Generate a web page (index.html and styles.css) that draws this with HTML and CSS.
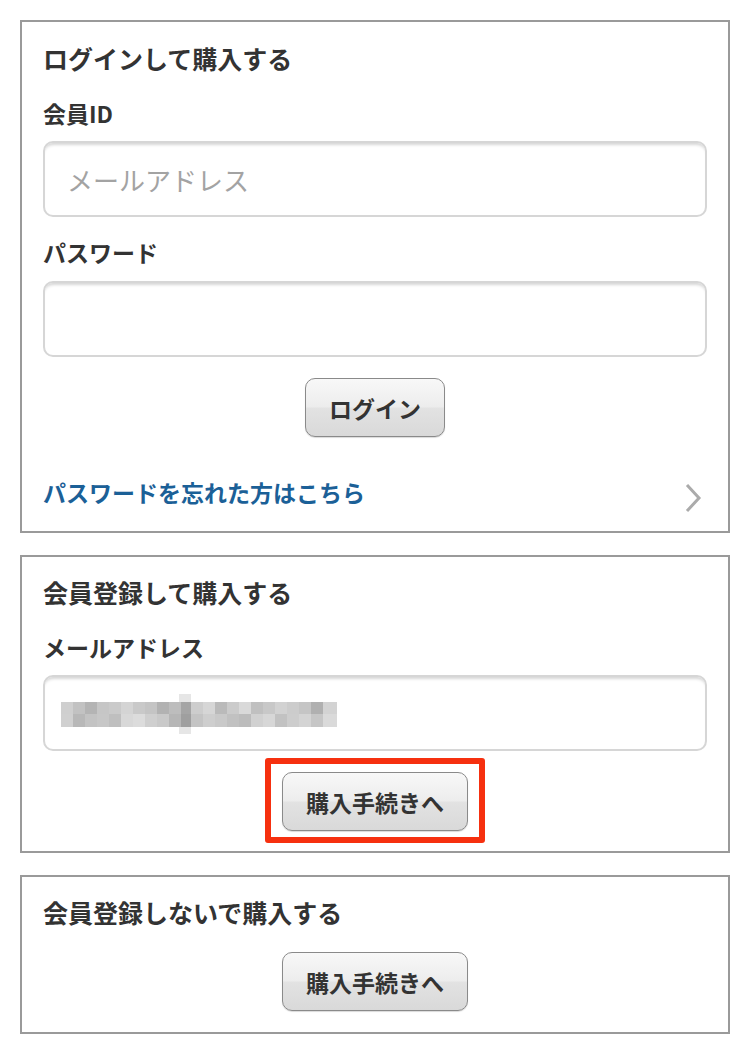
FILE: index.html
```html
<!DOCTYPE html>
<html lang="ja">
<head>
  <meta charset="UTF-8">
  <meta name="viewport" content="width=device-width, initial-scale=1.0">
  <title>購入方法の選択</title>
  <link rel="stylesheet" href="styles.css">
</head>
<body>

<!-- login -->
<div class="card">
  <h2 class="card-title">ログインして購入する</h2>
  <div class="label">会員ID</div>
  <input class="field" type="text" placeholder="メールアドレス">
  <div class="label">パスワード</div>
  <input class="field" type="password">
  <div class="btn-row">
    <button class="btn">ログイン</button>
  </div>
  <a class="link-row" href="#">
    <span>パスワードを忘れた方はこちら</span>
    <svg class="chevron" width="18" height="30" viewBox="0 0 18 30">
      <path d="M3 2 L15 15 L3 28" fill="none" stroke="#ababab" stroke-width="3"/>
    </svg>
  </a>
</div>

<!-- register -->
<div class="card">
  <h2 class="card-title">会員登録して購入する</h2>
  <div class="label">メールアドレス</div>
  <div class="field filled">
    <svg class="mosaic" width="280" height="40" viewBox="0 0 280 40">
      <rect x="118" y="0" width="12" height="40" fill="#e6e6e6"/>
      <g>
        <rect x="0" y="8" width="12" height="12" fill="#cfcfcf"/>
        <rect x="12" y="8" width="12" height="12" fill="#c2c2c2"/>
        <rect x="24" y="8" width="12" height="12" fill="#b4b4b4"/>
        <rect x="36" y="8" width="12" height="12" fill="#c6c6c6"/>
        <rect x="48" y="8" width="12" height="12" fill="#cacaca"/>
        <rect x="60" y="8" width="12" height="12" fill="#d4d4d4"/>
        <rect x="72" y="8" width="12" height="12" fill="#c9c9c9"/>
        <rect x="84" y="8" width="12" height="12" fill="#c4c4c4"/>
        <rect x="96" y="8" width="12" height="12" fill="#b2b2b2"/>
        <rect x="108" y="8" width="12" height="12" fill="#bdbdbd"/>
        <rect x="120" y="8" width="10" height="12" fill="#a5a5a5"/>
        <rect x="130" y="8" width="12" height="12" fill="#cdcdcd"/>
        <rect x="142" y="8" width="12" height="12" fill="#d6d6d6"/>
        <rect x="154" y="8" width="12" height="12" fill="#bababa"/>
        <rect x="166" y="8" width="12" height="12" fill="#cbcbcb"/>
        <rect x="178" y="8" width="12" height="12" fill="#d9d9d9"/>
        <rect x="190" y="8" width="12" height="12" fill="#c0c0c0"/>
        <rect x="202" y="8" width="12" height="12" fill="#c8c8c8"/>
        <rect x="214" y="8" width="12" height="12" fill="#d2d2d2"/>
        <rect x="226" y="8" width="12" height="12" fill="#cccccc"/>
        <rect x="238" y="8" width="12" height="12" fill="#c5c5c5"/>
        <rect x="250" y="8" width="12" height="12" fill="#b0b0b0"/>
        <rect x="262" y="8" width="14" height="12" fill="#d3d3d3"/>
      </g>
      <g>
        <rect x="0" y="20" width="12" height="13" fill="#d0d0d0"/>
        <rect x="12" y="20" width="12" height="13" fill="#b8b8b8"/>
        <rect x="24" y="20" width="12" height="13" fill="#c3c3c3"/>
        <rect x="36" y="20" width="12" height="13" fill="#c7c7c7"/>
        <rect x="48" y="20" width="12" height="13" fill="#bfbfbf"/>
        <rect x="60" y="20" width="12" height="13" fill="#d8d8d8"/>
        <rect x="72" y="20" width="12" height="13" fill="#dcdcdc"/>
        <rect x="84" y="20" width="12" height="13" fill="#cfcfcf"/>
        <rect x="96" y="20" width="12" height="13" fill="#c9c9c9"/>
        <rect x="108" y="20" width="12" height="13" fill="#b6b6b6"/>
        <rect x="120" y="20" width="10" height="13" fill="#9f9f9f"/>
        <rect x="130" y="20" width="12" height="13" fill="#c4c4c4"/>
        <rect x="142" y="20" width="12" height="13" fill="#cecece"/>
        <rect x="154" y="20" width="12" height="13" fill="#c9c9c9"/>
        <rect x="166" y="20" width="12" height="13" fill="#c1c1c1"/>
        <rect x="178" y="20" width="12" height="13" fill="#bcbcbc"/>
        <rect x="190" y="20" width="12" height="13" fill="#d1d1d1"/>
        <rect x="202" y="20" width="12" height="13" fill="#d7d7d7"/>
        <rect x="214" y="20" width="12" height="13" fill="#c2c2c2"/>
        <rect x="226" y="20" width="12" height="13" fill="#cdcdcd"/>
        <rect x="238" y="20" width="12" height="13" fill="#d4d4d4"/>
        <rect x="250" y="20" width="12" height="13" fill="#c6c6c6"/>
        <rect x="262" y="20" width="14" height="13" fill="#dadada"/>
      </g>
    </svg>
  </div>
  <div class="btn-row">
    <span class="highlight">
      <button class="btn">購入手続きへ</button>
    </span>
  </div>
</div>

<!-- guest -->
<div class="card card-guest">
  <h2 class="card-title">会員登録しないで購入する</h2>
  <div class="btn-row">
    <button class="btn">購入手続きへ</button>
  </div>
</div>

</body>
</html>
```

FILE: styles.css
```css
body {
  margin: 0;
  padding: 20px 20px 0;
  background: #ffffff;
  color: #333333;
  font-family: "Noto Sans CJK JP", "Noto Sans", sans-serif;
}

.card {
  border: 2px solid #9a9a9a;
  padding: 19px 21px 23px;
  margin-bottom: 22px;
}

.card + .card {
  padding-top: 18px;
  padding-bottom: 20px;
}

.card-guest {
  padding-bottom: 21px !important;
}

.card-title {
  margin: 0;
  font-size: 25px;
  line-height: 34px;
  font-weight: bold;
  color: #333333;
}

.label {
  margin-top: 22px;
  font-size: 23px;
  line-height: 32px;
  font-weight: bold;
}

.field {
  display: block;
  box-sizing: border-box;
  width: 100%;
  height: 76px;
  margin-top: 12px;
  padding: 0 22px;
  border: 2px solid #d6d6d6;
  border-radius: 10px;
  background: #ffffff;
  box-shadow: inset 0 4px 3px -2px rgba(0, 0, 0, 0.16);
  font-family: inherit;
  font-size: 26px;
  color: #333333;
  outline: none;
}

.field::placeholder {
  color: #a3a3a3;
}

.field + .label {
  margin-top: 19px;
}

.label + .field + .label + .field {
  margin-top: 13px;
}

.filled {
  display: flex;
  align-items: center;
  padding-left: 16px;
}

.mosaic {
  display: block;
  margin-top: 2px;
}

.btn-row {
  display: flex;
  justify-content: center;
  margin-top: 21px;
}

.card-guest .btn-row {
  margin-top: 23px;
}

.btn {
  height: 59px;
  padding: 0 23px;
  border: 1px solid #8a8a8a;
  border-radius: 10px;
  background: linear-gradient(#f8f8f8 0%, #ededed 48%, #e2e2e2 52%, #d9d9d9 100%);
  box-shadow: 0 1px 1px rgba(0, 0, 0, 0.15);
  font-family: inherit;
  font-size: 23px;
  font-weight: bold;
  color: #333333;
  cursor: pointer;
}

.highlight {
  position: relative;
  display: inline-block;
}

.highlight::after {
  content: "";
  position: absolute;
  top: -14px;
  bottom: -12px;
  left: -17px;
  right: -17px;
  border: 6px solid #f6300f;
  border-radius: 3px;
  pointer-events: none;
}

.link-row {
  display: flex;
  justify-content: space-between;
  align-items: center;
  margin-top: 39px;
  font-size: 23px;
  line-height: 32px;
  font-weight: bold;
  color: #1b6097;
  text-decoration: none;
}

.chevron {
  display: block;
  margin: 6px 5px -6px 0;
}
```
